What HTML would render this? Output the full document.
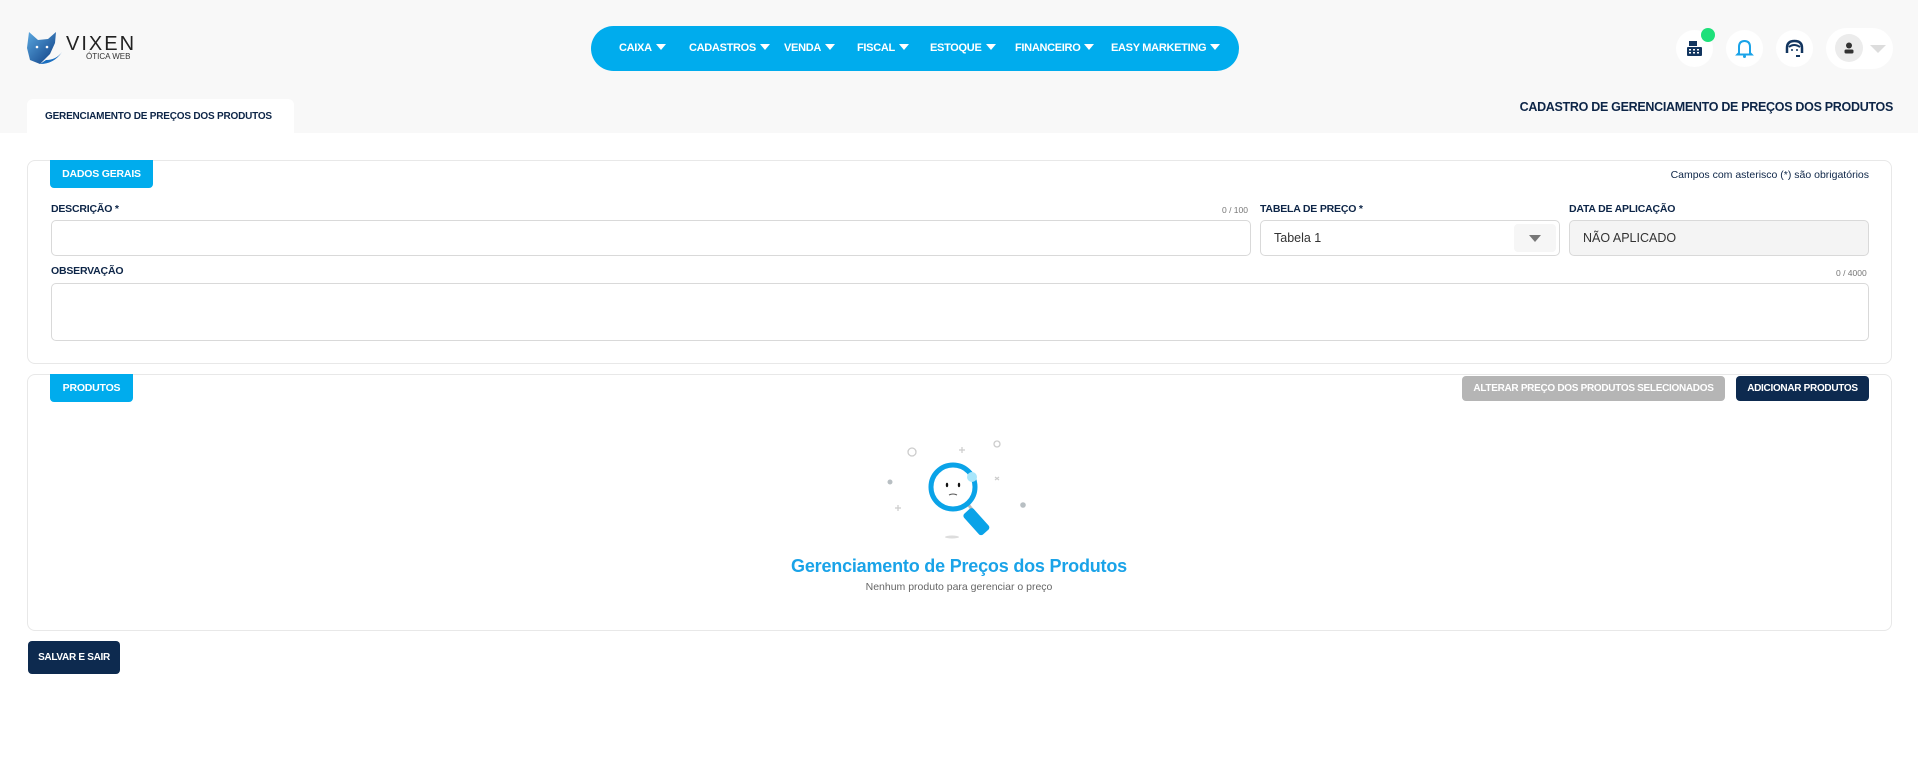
<!DOCTYPE html>
<html><head><meta charset="utf-8"><style>
*{box-sizing:border-box;margin:0;padding:0}
body{width:1918px;height:772px;background:#fff;font-family:"Liberation Sans",Arial,sans-serif;position:relative;overflow:hidden;color:#0d2547}
.a{position:absolute}
.top{left:0;top:0;width:1918px;height:133px;background:#f8f8f8}
.nav{left:591px;top:26px;width:648px;height:45px;background:#00aced;border-radius:23px}
.ni{position:absolute;top:16px;color:#fff;font-size:11px;font-weight:bold;letter-spacing:-0.3px;white-space:nowrap}
.ni:after{content:"";display:inline-block;margin-left:4px;border-left:5px solid transparent;border-right:5px solid transparent;border-top:6px solid #fff;vertical-align:1px}
.ic{width:37px;height:37px;border-radius:50%;background:#fff;top:30px}
.card{border:1px solid #e8e8e8;border-radius:8px;background:#fff}
.badge{background:#00aced;color:#fff;font-size:10.5px;font-weight:bold;border-radius:0 0 4px 4px;text-align:center;letter-spacing:-0.2px}
.lbl{font-size:10.5px;font-weight:bold;color:#0d2547;letter-spacing:-0.2px}
.inp{border:1px solid #d9d9d9;border-radius:5px;background:#fff}
.cnt{font-size:8.5px;color:#777}
.btn{font-size:10px;font-weight:bold;color:#fff;border-radius:4px;text-align:center;letter-spacing:-0.3px;white-space:nowrap}
</style></head><body>
<div class="a top"></div>
<svg class="a" style="left:26px;top:30px" width="42" height="36" viewBox="0 0 42 36">
<defs><linearGradient id="g" x1="0" y1="0" x2="1" y2="1"><stop offset="0" stop-color="#5aa8e0"/><stop offset="1" stop-color="#0d3c82"/></linearGradient></defs>
<path d="M3 2 L12 10 L22 9 L30 2 L29 13 L24 24 L14 34 L4 30 L1 18 Z" fill="url(#g)"/>
<path d="M14 34 Q28 34 36 22 Q30 30 20 30 Z" fill="#1b6fc0"/>
<circle cx="11" cy="17" r="1.3" fill="#fff"/><circle cx="21" cy="17" r="1.3" fill="#fff"/>
</svg>
<div class="a" style="left:66px;top:33px;font-size:20px;letter-spacing:2px;color:#222;font-weight:normal">VIXEN</div>
<div class="a" style="left:86px;top:52px;font-size:8px;color:#333">ÓTICA WEB</div>
<div class="a nav">
<span class="ni" style="left:28px">CAIXA</span>
<span class="ni" style="left:98px">CADASTROS</span>
<span class="ni" style="left:193px">VENDA</span>
<span class="ni" style="left:266px">FISCAL</span>
<span class="ni" style="left:339px">ESTOQUE</span>
<span class="ni" style="left:424px">FINANCEIRO</span>
<span class="ni" style="left:520px">EASY MARKETING</span>
</div>
<div class="a ic" style="left:1676px"><svg width="37" height="37"><rect x="11" y="17" width="15" height="9" rx="1" fill="#12355f"/><rect x="13" y="11" width="8" height="5" fill="#12355f"/><g fill="#fff"><rect x="13" y="19" width="2" height="1.5"/><rect x="17" y="19" width="2" height="1.5"/><rect x="21" y="19" width="2" height="1.5"/><rect x="13" y="22" width="2" height="1.5"/><rect x="17" y="22" width="2" height="1.5"/><rect x="21" y="22" width="2" height="1.5"/></g></svg></div>
<div class="a" style="left:1701px;top:28px;width:14px;height:14px;border-radius:50%;background:#1ee07a"></div>
<div class="a ic" style="left:1726px"><svg width="37" height="37"><path d="M13 23 L13 17 Q13 11 18.5 11 Q24 11 24 17 L24 23 L25.5 24.5 L11.5 24.5 Z" fill="none" stroke="#1aa3e8" stroke-width="2"/><circle cx="18.5" cy="26.5" r="1.5" fill="#1aa3e8"/></svg></div>
<div class="a ic" style="left:1776px"><svg width="37" height="37"><path d="M11 23 L11 18 Q11 11 18.5 11 Q26 11 26 18 L26 23" fill="none" stroke="#12355f" stroke-width="2.5"/><path d="M13 17 Q18 13 24 17" fill="none" stroke="#12355f" stroke-width="2"/><circle cx="16" cy="20" r="1" fill="#12355f"/><circle cx="21" cy="20" r="1" fill="#12355f"/><path d="M20 26 L24 26" stroke="#12355f" stroke-width="2"/></svg></div>
<div class="a" style="left:1826px;top:28px;width:67px;height:41px;border-radius:21px;background:#fff"></div>
<div class="a" style="left:1835px;top:34px;width:28px;height:28px;border-radius:50%;background:#ececec"><svg width="28" height="28"><circle cx="14" cy="11.5" r="3" fill="#333"/><rect x="9.5" y="15.5" width="9" height="4" rx="1.5" fill="#333"/></svg></div>
<div class="a" style="left:1870px;top:45px;border-left:8px solid transparent;border-right:8px solid transparent;border-top:8px solid #ddd"></div>
<div class="a" style="left:27px;top:99px;width:267px;height:34px;background:#fff;border-radius:6px 6px 0 0"></div>
<div class="a" style="left:45px;top:111px;font-size:10px;font-weight:bold;color:#0d2547;letter-spacing:-0.2px">GERENCIAMENTO DE PREÇOS DOS PRODUTOS</div>
<div class="a" style="right:25px;top:100px;font-size:12.5px;font-weight:bold;color:#0d2547;letter-spacing:-0.3px">CADASTRO DE GERENCIAMENTO DE PREÇOS DOS PRODUTOS</div>
<div class="a card" style="left:27px;top:160px;width:1865px;height:204px"></div>
<div class="a badge" style="left:50px;top:160px;width:103px;height:28px;line-height:28px">DADOS GERAIS</div>
<div class="a" style="right:49px;top:169px;font-size:10.5px;color:#0d2547">Campos com asterisco (*) são obrigatórios</div>
<div class="a lbl" style="left:51px;top:203px">DESCRIÇÃO *</div>
<div class="a cnt" style="left:1222px;top:205px">0 / 100</div>
<div class="a inp" style="left:51px;top:220px;width:1200px;height:36px"></div>
<div class="a lbl" style="left:1260px;top:203px">TABELA DE PREÇO *</div>
<div class="a inp" style="left:1260px;top:220px;width:300px;height:36px"></div>
<div class="a" style="left:1274px;top:231px;font-size:12.5px;color:#333">Tabela 1</div>
<div class="a" style="left:1514px;top:224px;width:42px;height:28px;background:#f6f6f6;border-radius:4px"></div>
<div class="a" style="left:1529px;top:235px;border-left:6px solid transparent;border-right:6px solid transparent;border-top:7px solid #777"></div>
<div class="a lbl" style="left:1569px;top:203px">DATA DE APLICAÇÃO</div>
<div class="a inp" style="left:1569px;top:220px;width:300px;height:36px;background:#f4f4f4"></div>
<div class="a" style="left:1583px;top:231px;font-size:12.5px;color:#333">NÃO APLICADO</div>
<div class="a lbl" style="left:51px;top:265px">OBSERVAÇÃO</div>
<div class="a cnt" style="left:1836px;top:268px">0 / 4000</div>
<div class="a inp" style="left:51px;top:283px;width:1818px;height:58px"></div>
<div class="a card" style="left:27px;top:374px;width:1865px;height:257px"></div>
<div class="a badge" style="left:50px;top:374px;width:83px;height:28px;line-height:28px">PRODUTOS</div>
<div class="a btn" style="left:1462px;top:376px;width:263px;height:25px;line-height:25px;background:#b5b5b5">ALTERAR PREÇO DOS PRODUTOS SELECIONADOS</div>
<div class="a btn" style="left:1736px;top:376px;width:133px;height:25px;line-height:25px;background:#0d2a4f">ADICIONAR PRODUTOS</div>
<svg class="a" style="left:880px;top:435px" width="160" height="110" viewBox="0 0 160 110">
<circle cx="32" cy="17" r="4" fill="none" stroke="#ccc" stroke-width="1.3"/>
<circle cx="117" cy="9" r="3" fill="none" stroke="#ccc" stroke-width="1.3"/>
<path d="M82 12v6M79 15h6M18 70v6M15 73h6M115 42l4 3M119 42l-4 3" stroke="#ccc" stroke-width="1.2"/>
<circle cx="10" cy="47" r="2.5" fill="#b8bfc3"/>
<circle cx="143" cy="70" r="2.8" fill="#b8bfc3"/>
<ellipse cx="72" cy="102" rx="7" ry="1.5" fill="#ddd"/>
<line x1="87" y1="68" x2="94" y2="77" stroke="#bbb" stroke-width="3"/>
<rect x="90" y="73" width="13" height="28" rx="3" fill="#0aa3e8" transform="rotate(-42 96 87)"/>
<circle cx="73" cy="52" r="22" fill="#fff" stroke="#0aa3e8" stroke-width="5"/>
<circle cx="92" cy="42" r="5" fill="#a8e6fb"/>
<ellipse cx="67" cy="50" rx="1.2" ry="2.2" fill="#111"/><ellipse cx="79" cy="50" rx="1.2" ry="2.2" fill="#111"/>
<path d="M69 60 Q73 58 77 60" fill="none" stroke="#555" stroke-width="1"/>
</svg>
<div class="a" style="left:0;width:1918px;text-align:center;top:556px;font-size:18px;font-weight:bold;color:#1aa3e8;letter-spacing:-0.2px">Gerenciamento de Preços dos Produtos</div>
<div class="a" style="left:0;width:1918px;text-align:center;top:581px;font-size:10.5px;color:#666">Nenhum produto para gerenciar o preço</div>
<div class="a btn" style="left:28px;top:641px;width:92px;height:33px;line-height:33px;background:#0d2a4f">SALVAR E SAIR</div>
</body></html>
